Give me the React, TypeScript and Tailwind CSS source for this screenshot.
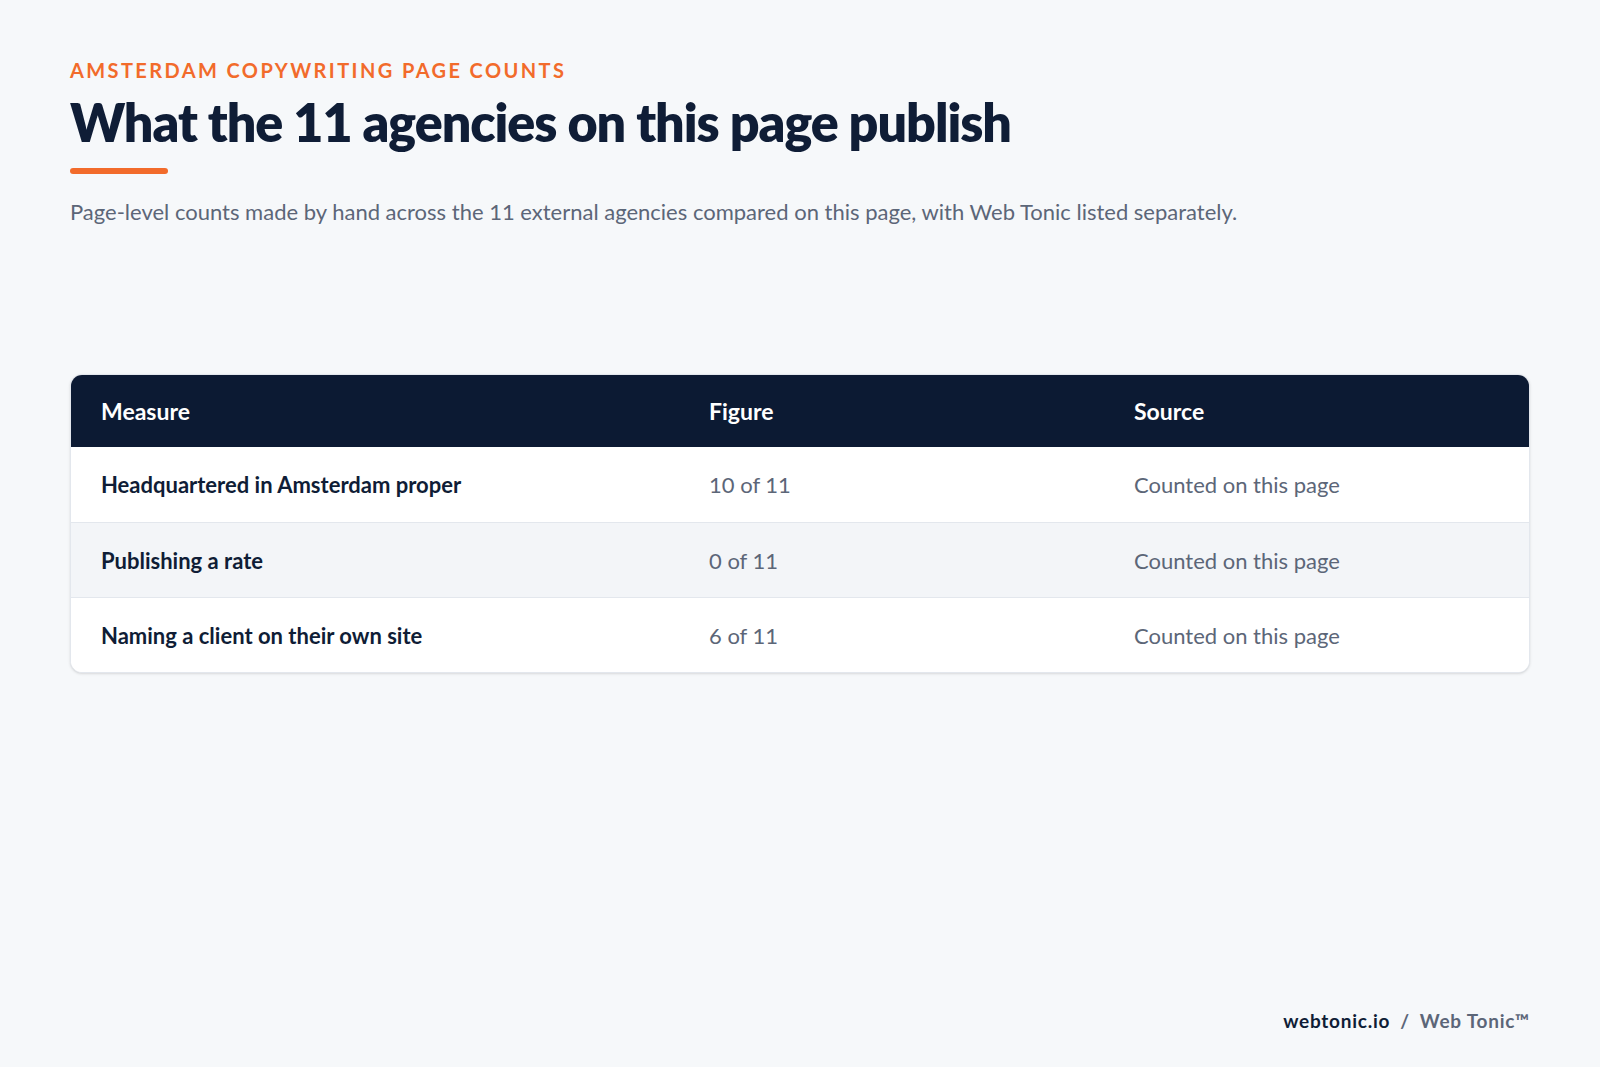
const rows = [
  ['Headquartered in Amsterdam proper', '10 of 11', 'Counted on this page'],
  ['Publishing a rate', '0 of 11', 'Counted on this page'],
  ['Naming a client on their own site', '6 of 11', 'Counted on this page'],
]

export default function App() {
  return (
    <div className="flex h-[1067px] w-[1600px] flex-col bg-[#f6f8fa] px-[70px] font-[Lato,sans-serif]">
      <p className="mt-[58px] text-[20px] font-bold uppercase leading-6 tracking-[0.12em] text-[#f26b2b]">
        Amsterdam copywriting page counts
      </p>
      <h1 className="mt-[10px] text-[52px] font-extrabold leading-[60px] tracking-[-0.02em] text-[#0f1d36]">
        What the 11 agencies on this page publish
      </h1>
      <div className="mt-[16px] h-[6px] w-[98px] rounded-full bg-[#f26b2b]" />
      <p className="mt-[22px] text-[22px] leading-8 text-[#5c6678]">
        Page-level counts made by hand across the 11 external agencies compared on this page, with Web Tonic listed separately.
      </p>

      <div className="mt-[146px] overflow-hidden rounded-xl border border-[#e3e7ed] bg-white shadow-sm">
        <div className="grid h-[72px] grid-cols-[608px_425px_1fr] items-center bg-[#0c1a33] pl-[30px] text-[23px] font-bold text-white">
          <div>Measure</div>
          <div>Figure</div>
          <div>Source</div>
        </div>
        {rows.map((r, i) => (
          <div
            key={i}
            className={`grid h-[75px] grid-cols-[608px_425px_1fr] items-center pl-[30px] text-[22px] ${i > 0 ? 'border-t border-[#e3e7ed]' : ''} ${i === 1 ? 'bg-[#f3f5f8]' : 'bg-white'}`}
          >
            <div className="font-bold text-[#0f1d36]">{r[0]}</div>
            <div className="text-[#5c6678]">{r[1]}</div>
            <div className="text-[#5c6678]">{r[2]}</div>
          </div>
        ))}
      </div>

      <div className="mt-auto mb-[32px] flex justify-end gap-[10px] text-[19px] font-bold tracking-[0.04em]">
        <span className="text-[#0f1d36]">webtonic.io</span>
        <span className="text-[#5c6678]">/</span>
        <span className="text-[#5c6678]">Web Tonic™</span>
      </div>
    </div>
  )
}
